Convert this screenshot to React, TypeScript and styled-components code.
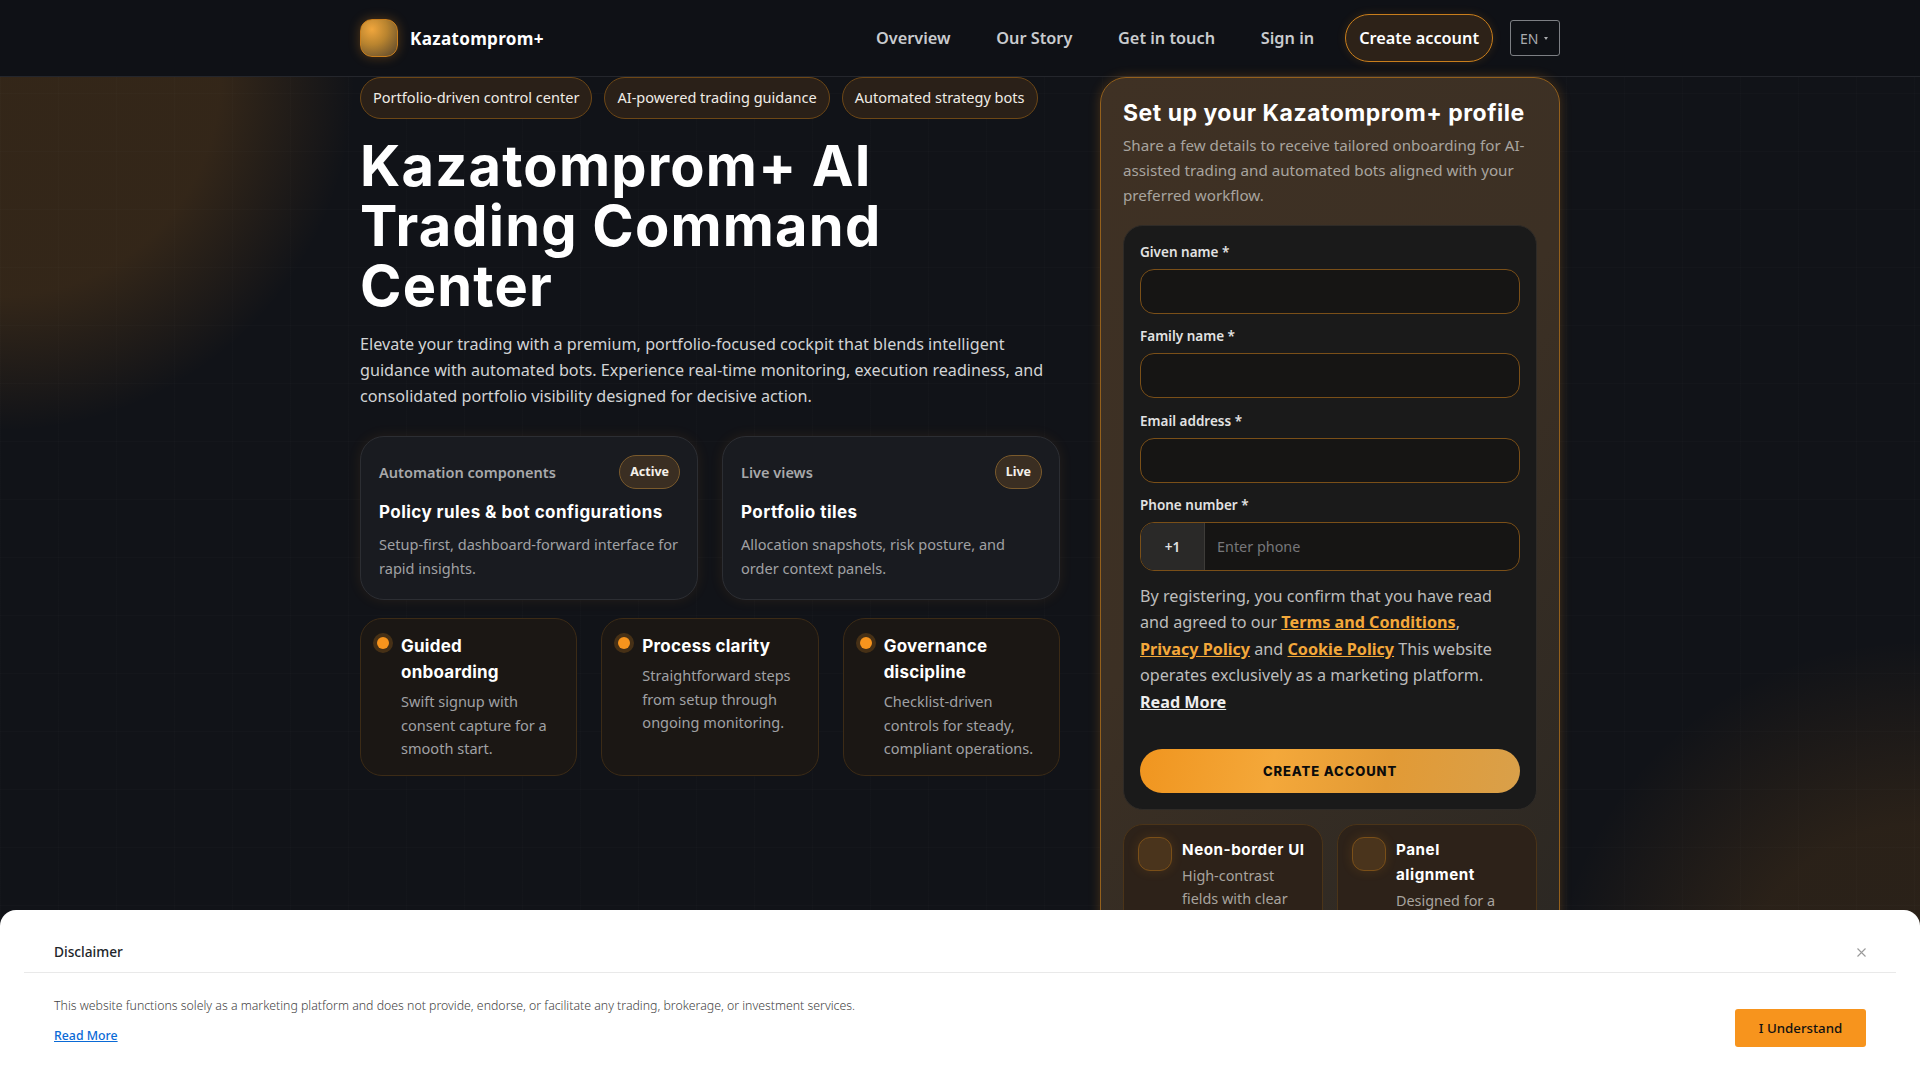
import { createGlobalStyle } from "styled-components";
import styled from "styled-components";

const bodyFont = `"Noto Sans", "Open Sans", sans-serif`;
const headFont = `Inter, "Noto Sans", sans-serif`;

const GlobalStyle = createGlobalStyle`
  * { box-sizing: border-box; }
  html, body { margin: 0; padding: 0; background: #111318; }
  body { font-family: ${bodyFont}; color: #fff; overflow: hidden; }
`;

const navLinks = ["Overview", "Our Story", "Get in touch", "Sign in"];
const pills = [
  "Portfolio-driven control center",
  "AI-powered trading guidance",
  "Automated strategy bots",
];
const tiles = [
  {
    label: "Automation components",
    chip: "Active",
    title: "Policy rules & bot configurations",
    text: "Setup-first, dashboard-forward interface for rapid insights.",
  },
  {
    label: "Live views",
    chip: "Live",
    title: "Portfolio tiles",
    text: "Allocation snapshots, risk posture, and order context panels.",
  },
];
const points = [
  {
    title: "Guided onboarding",
    text: "Swift signup with consent capture for a smooth start.",
  },
  {
    title: "Process clarity",
    text: "Straightforward steps from setup through ongoing monitoring.",
  },
  {
    title: "Governance discipline",
    text: "Checklist-driven controls for steady, compliant operations.",
  },
];
const features = [
  {
    title: "Neon-border UI",
    text: "High-contrast fields with clear focus states.",
  },
  {
    title: "Panel alignment",
    text: "Designed for a tidy, consistent flow.",
  },
];

const App = () => {
  return (
    <Page>
      <GlobalStyle />
      <Header>
        <HeaderInner>
          <Brand>
            <Logo />
            <BrandName>Kazatomprom+</BrandName>
          </Brand>
          <Nav>
            {navLinks.map((link) => (
              <NavLink key={link}>{link}</NavLink>
            ))}
            <CreateLink>Create account</CreateLink>
            <LangButton>
              EN
              <LangCaret />
            </LangButton>
          </Nav>
        </HeaderInner>
      </Header>
      <Main>
        <Left>
          <PillRow>
            {pills.map((p) => (
              <Pill key={p}>{p}</Pill>
            ))}
          </PillRow>
          <Title>Kazatomprom+ AI Trading Command Center</Title>
          <Lead>
            Elevate your trading with a premium, portfolio-focused cockpit that
            blends intelligent guidance with automated bots. Experience
            real-time monitoring, execution readiness, and consolidated
            portfolio visibility designed for decisive action.
          </Lead>
          <TileGrid>
            {tiles.map((t) => (
              <Tile key={t.label}>
                <TileTop>
                  <TileLabel>{t.label}</TileLabel>
                  <Chip>{t.chip}</Chip>
                </TileTop>
                <TileTitle>{t.title}</TileTitle>
                <TileText>{t.text}</TileText>
              </Tile>
            ))}
          </TileGrid>
          <PointGrid>
            {points.map((pt) => (
              <Point key={pt.title}>
                <Dot />
                <div>
                  <PointTitle>{pt.title}</PointTitle>
                  <PointText>{pt.text}</PointText>
                </div>
              </Point>
            ))}
          </PointGrid>
        </Left>
        <Panel>
          <PanelTitle>Set up your Kazatomprom+ profile</PanelTitle>
          <PanelSub>
            Share a few details to receive tailored onboarding for AI-assisted
            trading and automated bots aligned with your preferred workflow.
          </PanelSub>
          <Form>
            <FieldLabel>Given name *</FieldLabel>
            <Input />
            <FieldLabel>Family name *</FieldLabel>
            <Input />
            <FieldLabel>Email address *</FieldLabel>
            <Input />
            <FieldLabel>Phone number *</FieldLabel>
            <PhoneRow>
              <PhonePrefix>+1</PhonePrefix>
              <PhoneInput placeholder="Enter phone" />
            </PhoneRow>
            <Consent>
              By registering, you confirm that you have read and agreed to our{" "}
              <ConsentLink>Terms and Conditions</ConsentLink>,{" "}
              <ConsentLink>Privacy Policy</ConsentLink> and{" "}
              <ConsentLink>Cookie Policy</ConsentLink> This website operates
              exclusively as a marketing platform. <ReadMore>Read More</ReadMore>
            </Consent>
            <Submit>CREATE ACCOUNT</Submit>
          </Form>
          <FeatureGrid>
            {features.map((f) => (
              <Feature key={f.title}>
                <FeatureIcon />
                <div>
                  <FeatureTitle>{f.title}</FeatureTitle>
                  <FeatureText>{f.text}</FeatureText>
                </div>
              </Feature>
            ))}
          </FeatureGrid>
        </Panel>
      </Main>
      <Disclaimer>
        <DisclaimerHead>
          <DisclaimerTitle>Disclaimer</DisclaimerTitle>
          <CloseButton aria-label="Close">
            <svg width="9" height="9" viewBox="0 0 9 9">
              <path d="M.5.5l8 8M8.5.5l-8 8" stroke="#9a9a9a" strokeWidth="1.1" fill="none" />
            </svg>
          </CloseButton>
        </DisclaimerHead>
        <DisclaimerBody>
          <div>
            <DisclaimerText>
              This website functions solely as a marketing platform and does not
              provide, endorse, or facilitate any trading, brokerage, or
              investment services.
            </DisclaimerText>
            <DisclaimerLink>Read More</DisclaimerLink>
          </div>
          <UnderstandButton>I Understand</UnderstandButton>
        </DisclaimerBody>
      </Disclaimer>
    </Page>
  );
};

const Page = styled.div`
  height: 100vh;
  overflow: hidden;
  background:
    repeating-linear-gradient(90deg, rgba(255, 255, 255, 0.012) 0 1px, transparent 1px 58px),
    repeating-linear-gradient(0deg, rgba(255, 255, 255, 0.012) 0 1px, transparent 1px 58px),
    radial-gradient(circle 355px at 0px 76px, rgba(247, 148, 29, 0.15) 62%, rgba(247, 148, 29, 0) 100%),
    radial-gradient(circle 370px at 1920px 1010px, rgba(247, 148, 29, 0.11) 50%, rgba(247, 148, 29, 0) 100%),
    #111318;
`;

const Header = styled.header`
  height: 77px;
  background: #0f1116;
  border-bottom: 1px solid #24262c;
`;

const HeaderInner = styled.div`
  width: 1200px;
  height: 76px;
  margin: 0 auto;
  display: flex;
  align-items: center;
  justify-content: space-between;
`;

const Brand = styled.div`
  display: flex;
  align-items: center;
  gap: 12px;
`;

const Logo = styled.div`
  width: 38px;
  height: 38px;
  border-radius: 12px;
  border: 1px solid #c97e1c;
  background: radial-gradient(circle at 30% 26%, #f0a63d 0%, #b9842f 42%, #54432c 100%);
  box-shadow: 0 0 12px rgba(247, 148, 29, 0.3);
`;

const BrandName = styled.span`
  font-size: 17.1px;
  font-weight: 700;
  letter-spacing: 0.3px;
`;

const Nav = styled.nav`
  display: flex;
  align-items: center;
`;

const NavLink = styled.a`
  font-size: 16.3px;
  font-weight: 600;
  color: #c9cbce;
  margin-right: 45.7px;
`;

const CreateLink = styled.a`
  height: 48px;
  margin-left: -14.7px;
  padding: 0 13px;
  display: flex;
  align-items: center;
  border-radius: 24px;
  border: 1px solid #c97e1c;
  background: #2d2218;
  box-shadow: 0 0 10px rgba(247, 148, 29, 0.14);
  font-size: 16.3px;
  font-weight: 600;
  color: #fff;
`;

const LangButton = styled.div`
  width: 50px;
  height: 36px;
  margin-left: 17px;
  padding-left: 9px;
  display: flex;
  align-items: center;
  gap: 6px;
  border: 1px solid #7d7f84;
  border-radius: 3px;
  font-size: 14px;
  color: #a9abae;
`;

const LangCaret = styled.span`
  width: 0;
  height: 0;
  border-left: 2.5px solid transparent;
  border-right: 2.5px solid transparent;
  border-top: 3px solid #a9abae;
`;

const Main = styled.main`
  width: 1200px;
  margin: 0 auto;
  display: flex;
  gap: 40px;
  align-items: flex-start;
`;

const Left = styled.section`
  width: 700px;
`;

const PillRow = styled.div`
  display: flex;
  gap: 12px;
`;

const Pill = styled.span`
  height: 42px;
  padding: 0 12px 2px;
  display: flex;
  align-items: center;
  border-radius: 21px;
  border: 1px solid #6d4716;
  background: #2a2018;
  font-size: 14.56px;
  color: #f0ece6;
`;

const Title = styled.h1`
  margin: 17px 0 0;
  max-width: 640px;
  font-family: ${headFont};
  font-size: 56px;
  line-height: 60px;
  font-weight: 700;
  letter-spacing: 1.2px;
`;

const Lead = styled.p`
  margin: 15px 0 0;
  font-size: 16.16px;
  line-height: 26px;
  color: #d2d3d5;
`;

const TileGrid = styled.div`
  margin-top: 27px;
  display: grid;
  grid-template-columns: 1fr 1fr;
  gap: 24px;
`;

const Tile = styled.article`
  height: 164px;
  padding: 18px 17px 18px 18px;
  border-radius: 24px;
  border: 1px solid #2c2e33;
  background: #191b20;
  box-shadow: 0 0 14px rgba(247, 148, 29, 0.09);
`;

const TileTop = styled.div`
  display: flex;
  align-items: center;
  justify-content: space-between;
`;

const TileLabel = styled.span`
  padding-bottom: 1px;
  font-size: 14.56px;
  font-weight: 600;
  color: #a8a9ab;
`;

const Chip = styled.span`
  height: 34px;
  padding: 0 10px 1px;
  display: flex;
  align-items: center;
  border-radius: 17px;
  border: 1px solid #7a5a2c;
  background: #3a2e22;
  font-size: 12.5px;
  font-weight: 700;
  color: #f5f1ea;
`;

const TileTitle = styled.h3`
  margin: 10px 0 0;
  font-family: ${headFont};
  font-size: 17px;
  line-height: 26px;
  font-weight: 700;
  letter-spacing: 0.45px;
`;

const TileText = styled.p`
  margin: 7px 0 0;
  font-size: 14.56px;
  line-height: 24px;
  color: #a0a1a4;
`;

const PointGrid = styled.div`
  margin-top: 18px;
  display: grid;
  grid-template-columns: repeat(3, 1fr);
  gap: 24px;
`;

const Point = styled.article`
  height: 158px;
  padding: 14px 16px;
  display: flex;
  gap: 12px;
  border-radius: 22px;
  border: 1px solid #3c2b16;
  background: #1b1714;
`;

const Dot = styled.span`
  flex: none;
  width: 12px;
  height: 12px;
  margin-top: 4px;
  border-radius: 50%;
  background: #f7941d;
  box-shadow: 0 0 0 4px rgba(247, 148, 29, 0.2);
`;

const PointTitle = styled.h4`
  margin: 0;
  font-family: ${headFont};
  font-size: 17px;
  line-height: 26px;
  font-weight: 700;
  letter-spacing: 0.25px;
`;

const PointText = styled.p`
  margin: 5px 0 0;
  font-size: 14.56px;
  line-height: 23.5px;
  color: #a0a1a4;
`;

const Panel = styled.aside`
  width: 460px;
  padding: 20px 22px 22px;
  border-radius: 26px;
  border: 1px solid #94601c;
  background: linear-gradient(135deg, #3f3124 0%, #3c3024 45%, #2a2723 100%);
  box-shadow: 0 0 12px rgba(247, 148, 29, 0.24);
`;

const PanelTitle = styled.h2`
  margin: 0;
  font-family: ${headFont};
  font-size: 23px;
  line-height: 30px;
  font-weight: 700;
  letter-spacing: 0.5px;
`;

const PanelSub = styled.p`
  margin: 5px 0 0;
  font-size: 15.2px;
  line-height: 25px;
  color: #a8a49f;
`;

const Form = styled.form`
  margin-top: 17px;
  padding: 16px;
  border-radius: 20px;
  border: 1px solid #2f2b27;
  background: #1a1a1a;
`;

const FieldLabel = styled.label`
  display: block;
  margin-top: 12.33px;
  font-size: 13.5px;
  line-height: 20px;
  font-weight: 600;
  color: #e2e2e2;

  &:first-child {
    margin-top: 0;
  }
`;

const Input = styled.input`
  display: block;
  width: 100%;
  height: 45px;
  margin-top: 7px;
  border-radius: 14px;
  border: 1px solid #7a4f18;
  background: #161514;
`;

const PhoneRow = styled.div`
  height: 49px;
  margin-top: 7px;
  display: flex;
  border-radius: 14px;
  border: 1px solid #7a4f18;
  background: #161514;
  overflow: hidden;
`;

const PhonePrefix = styled.span`
  width: 64px;
  display: flex;
  align-items: center;
  justify-content: center;
  border-right: 1px solid #3e3c39;
  background: #2a2928;
  font-size: 13.6px;
  font-weight: 600;
  color: #e2e2e2;
`;

const PhoneInput = styled.input`
  flex: 1;
  padding: 0 12px;
  border: 0;
  background: none;
  font-family: ${bodyFont};
  font-size: 14.4px;

  &::placeholder {
    color: #77777a;
    opacity: 1;
  }
`;

const Consent = styled.p`
  margin: 12px 0 0;
  padding-right: 10px;
  font-size: 16.16px;
  line-height: 26.4px;
  color: #bdbdbd;
`;

const ConsentLink = styled.a`
  color: #f4a83a;
  font-weight: 700;
  text-decoration: underline;
`;

const ReadMore = styled.a`
  color: #eee;
  font-weight: 700;
  text-decoration: underline;
`;

const Submit = styled.button`
  display: block;
  width: 100%;
  height: 44px;
  margin-top: 34px;
  border: 0;
  border-radius: 22px;
  background: linear-gradient(100deg, #f0951f 0%, #f4a83a 35%, #e29a35 65%, #d9a04a 100%);
  font-family: ${headFont};
  font-size: 13px;
  font-weight: 800;
  letter-spacing: 0.9px;
  color: #0c0c0c;
`;

const FeatureGrid = styled.div`
  margin-top: 14px;
  display: grid;
  grid-template-columns: 1fr 1fr;
  gap: 14px;
`;

const Feature = styled.article`
  padding: 12px 14px;
  display: flex;
  gap: 10px;
  border-radius: 20px;
  border: 1px solid #4b3418;
  background: #2d2219;
`;

const FeatureIcon = styled.span`
  flex: none;
  width: 34px;
  height: 34px;
  border-radius: 12px;
  border: 1px solid #7a4f18;
  background: #4a341c;
  box-shadow: 0 0 12px rgba(247, 148, 29, 0.14);
`;

const FeatureTitle = styled.h4`
  margin: 0;
  font-family: ${headFont};
  font-size: 15.2px;
  line-height: 25px;
  font-weight: 700;
  letter-spacing: 0.55px;
`;

const FeatureText = styled.p`
  margin: 1.5px 0 0;
  font-size: 14.4px;
  line-height: 23px;
  color: #a8a49f;
`;

const Disclaimer = styled.div`
  position: fixed;
  left: 0;
  right: 0;
  bottom: 0;
  height: 170px;
  padding: 0 24px;
  border-radius: 16px 16px 0 0;
  background: #fff;
  color: #212529;
`;

const DisclaimerHead = styled.div`
  height: 63px;
  padding: 0 30px;
  display: flex;
  align-items: center;
  justify-content: space-between;
  border-bottom: 1px solid #e9e9e9;
`;

const DisclaimerTitle = styled.span`
  padding-top: 20px;
  font-size: 13.7px;
  font-weight: 500;
`;

const CloseButton = styled.button`
  padding: 22px 0 0;
  border: 0;
  background: none;
  line-height: 0;
`;

const DisclaimerBody = styled.div`
  padding: 23px 30px 0;
  display: flex;
  align-items: flex-start;
  justify-content: space-between;
`;

const DisclaimerText = styled.p`
  margin: 0;
  font-size: 12.32px;
  line-height: 20px;
  font-weight: 300;
  color: #444;
`;

const DisclaimerLink = styled.a`
  display: block;
  margin-top: 10px;
  font-size: 12.32px;
  line-height: 20px;
  font-weight: 500;
  color: #0a6ad6;
  text-decoration: underline;
`;

const UnderstandButton = styled.button`
  width: 131px;
  height: 38px;
  margin-top: 13px;
  border: 0;
  border-radius: 3px;
  background: #f7941d;
  font-family: ${bodyFont};
  font-size: 13.3px;
  font-weight: 500;
  color: #111;
`;

export default App;
